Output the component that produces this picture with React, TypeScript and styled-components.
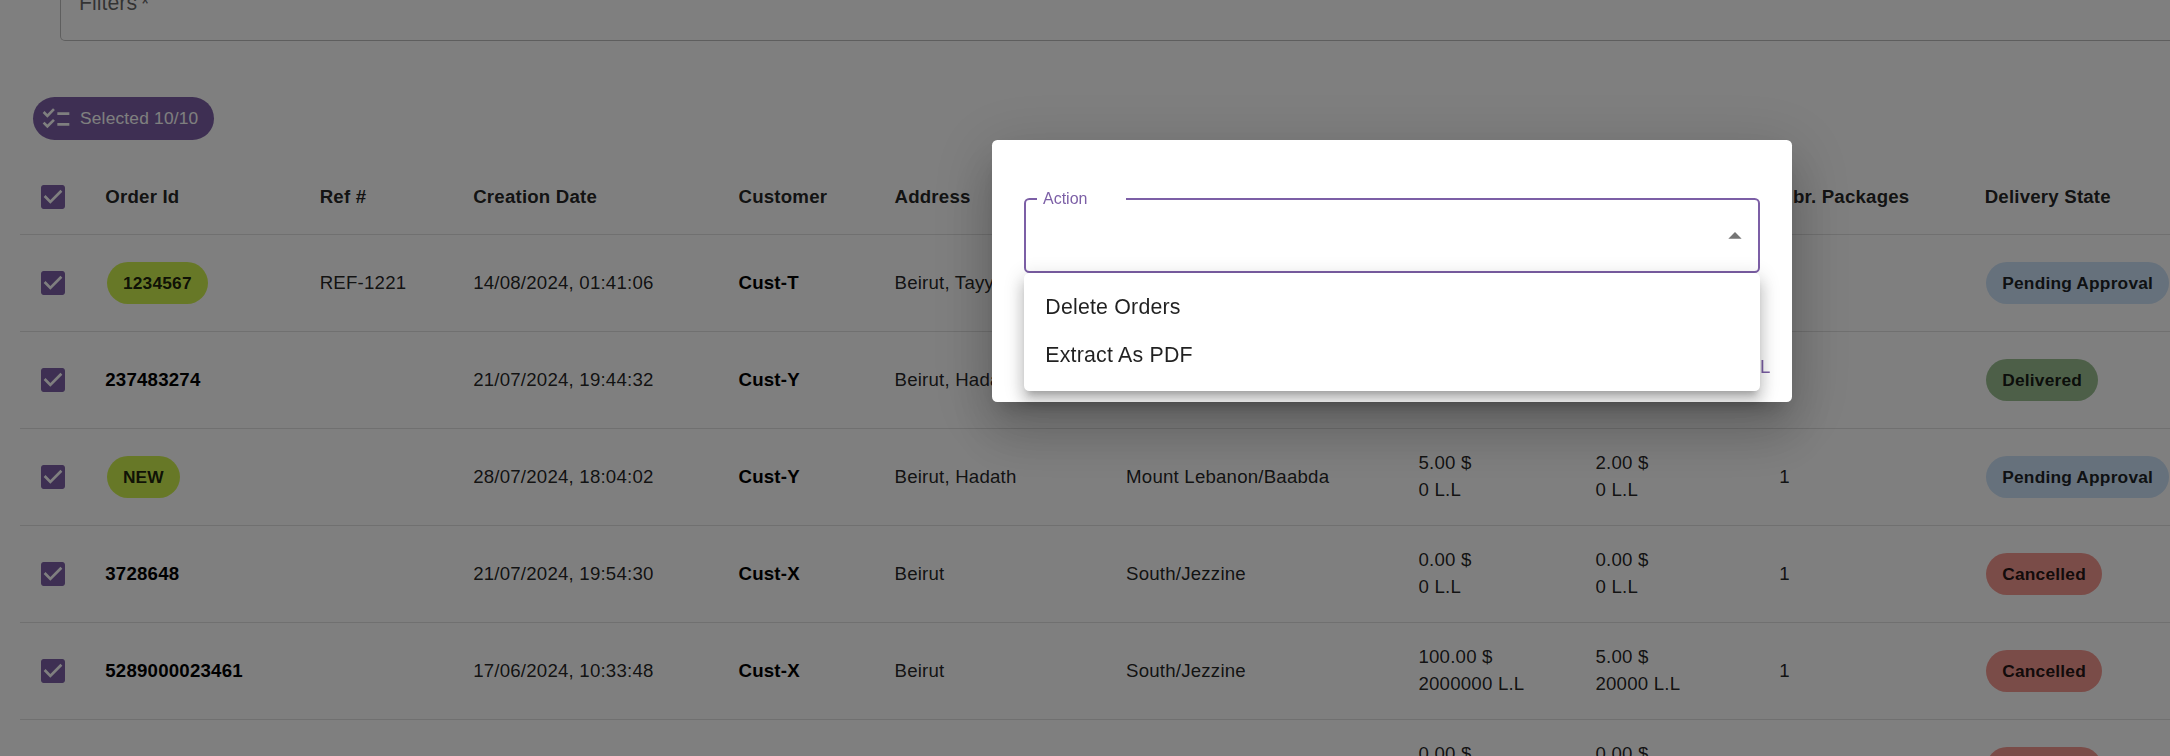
import React from "react";
import styled, { createGlobalStyle } from "styled-components";

const GlobalStyle = createGlobalStyle`
  * { box-sizing: border-box; }
  html, body { margin: 0; height: 756px; overflow: hidden; background: #fff; }
  body { font-family: "Liberation Sans", Helvetica, Arial, sans-serif; color: rgba(0, 0, 0, 0.87); }
`;

const PURPLE = "#7c5fa6";

const Page = styled.main`
  height: 756px;
  overflow: hidden;
  display: flex;
  flex-direction: column;
  align-items: flex-start;
`;

const FilterBox = styled.section`
  flex: none;
  width: 2200px;
  height: 41px;
  margin-left: 60px;
  padding-left: 18px;
  border: 1px solid rgba(0, 0, 0, 0.26);
  border-top: 0;
  border-radius: 0 0 5px 5px;
  color: rgba(0, 0, 0, 0.6);
  font-size: 21.33px;
  line-height: 30px;
`;

const FilterLabel = styled.span`
  display: block;
  margin-top: -12px;
`;

const Asterisk = styled.span`
  margin-left: 4px;
  vertical-align: -1px;
  line-height: 0;
`;

const SelectedChip = styled.button`
  flex: none;
  display: flex;
  align-items: center;
  width: 181px;
  height: 43px;
  margin: 56px 0 0 33px;
  padding: 0 0 0 7px;
  gap: 8px;
  border: 0;
  border-radius: 21.5px;
  background: ${PURPLE};
  color: #fff;
  font: 17.33px "Liberation Sans", Helvetica, Arial, sans-serif;
  letter-spacing: 0.2px;
  white-space: nowrap;
`;

const Table = styled.div`
  flex: none;
  width: 2240px;
  margin: 20px 0 0 20px;
  font-size: 18.67px;
  letter-spacing: 0.2px;
  line-height: 26.67px;
`;

const Row = styled.div<{ $head?: boolean }>`
  display: grid;
  grid-template-columns: 85.3px 214.4px 153.5px 265.3px 156px 231.6px 292.4px 177px 183.8px 205.4px 1fr;
  align-items: center;
  height: ${(p) => (p.$head ? 75 : 97)}px;
  border-bottom: 1px solid rgba(224, 224, 224, 1);
  font-weight: ${(p) => (p.$head ? 700 : 400)};
  white-space: nowrap;
`;

const CheckCell = styled.div`
  display: flex;
  padding-left: 17px;
`;

const StrongText = styled.strong`
  color: #000;
  font-weight: 700;
`;

const Chip = styled.span<{ $color: string }>`
  display: inline-flex;
  align-items: center;
  height: 42px;
  margin-left: 1.6px;
  padding: 0 16px;
  border-radius: 21px;
  background: ${(p) => p.$color};
  font-size: 17.33px;
  font-weight: 700;
  letter-spacing: 0.2px;
`;

const Backdrop = styled.div`
  position: fixed;
  inset: 0;
  display: flex;
  justify-content: center;
  align-items: flex-start;
  padding: 140px 0 0 614px;
  background: rgba(0, 0, 0, 0.5);
`;

const Dialog = styled.div`
  position: relative;
  width: 800px;
  height: 262px;
  padding: 50px 32px 0;
  border-radius: 5.33px;
  background: #fff;
  box-shadow:
    0 14.7px 20px -9.3px rgba(0, 0, 0, 0.2),
    0 32px 50.7px 4px rgba(0, 0, 0, 0.14),
    0 12px 61.3px 10.7px rgba(0, 0, 0, 0.12);
`;

const SelectField = styled.fieldset`
  display: flex;
  justify-content: flex-end;
  align-items: center;
  width: 736px;
  height: 83px;
  margin: 0;
  padding: 0 7px 7px 11px;
  border: 2px solid ${PURPLE};
  border-radius: 5.33px;
`;

const SelectLabel = styled.legend`
  width: 89px;
  height: 18px;
  padding: 0 0 0 6px;
  color: ${PURPLE};
  font-size: 16px;
  line-height: 18px;
`;

const Menu = styled.ul`
  position: absolute;
  top: 133px;
  left: 32px;
  width: 736px;
  height: 118px;
  margin: 0;
  padding: 10.67px 0;
  border-radius: 5.33px;
  background: #fff;
  list-style: none;
  box-shadow:
    0 6.7px 6.7px -4px rgba(0, 0, 0, 0.2),
    0 10.7px 13.3px 1.3px rgba(0, 0, 0, 0.14),
    0 4px 18.7px 2.7px rgba(0, 0, 0, 0.12);
`;

const MenuItem = styled.li`
  display: flex;
  align-items: center;
  height: 48px;
  padding: 0 21.33px;
  font-size: 21.33px;
  letter-spacing: 0.2px;
`;

const Actions = styled.footer`
  display: flex;
  justify-content: flex-end;
  padding-top: 80px;
  margin-right: -11px;
`;

const CancelButton = styled.button`
  border: 0;
  padding: 0;
  background: none;
  color: ${PURPLE};
  font: 18.67px/28px "Liberation Sans", Helvetica, Arial, sans-serif;
  letter-spacing: 0.53px;
`;

const Check = () => (
  <svg width="32" height="32" viewBox="0 0 24 24" aria-hidden="true">
    <path
      fill={PURPLE}
      d="M19 3H5c-1.11 0-2 .9-2 2v14c0 1.1.89 2 2 2h14c1.11 0 2-.9 2-2V5c0-1.1-.89-2-2-2zm-9 14l-5-5 1.41-1.41L10 14.17l7.59-7.59L19 8l-9 9z"
    />
  </svg>
);

const ChecklistIcon = () => (
  <svg width="32" height="32" viewBox="0 0 24 24" aria-hidden="true">
    <path
      fill="currentColor"
      d="M22 7h-9v2h9V7zm0 8h-9v2h9v-2zM5.54 11L2 7.46l1.41-1.41 2.12 2.12 4.24-4.24 1.41 1.41L5.54 11zm0 8L2 15.46l1.41-1.41 2.12 2.12 4.24-4.24 1.41 1.41L5.54 19z"
    />
  </svg>
);

const ArrowUp = () => (
  <svg width="32" height="32" viewBox="0 0 24 24" aria-hidden="true">
    <path fill="rgba(0,0,0,0.54)" d="M7 14l5-5 5 5z" />
  </svg>
);

type State = "Pending Approval" | "Delivered" | "Cancelled";

const STATE_COLORS: Record<State, string> = {
  "Pending Approval": "#cce2f8",
  Delivered: "#9abf91",
  Cancelled: "#f59890",
};

interface Order {
  id: string;
  isNew?: boolean;
  reference?: string;
  created: string;
  customer: string;
  address: string;
  region: string;
  price: [string, string];
  fees: [string, string];
  packages: number;
  state: State;
}

const ORDERS: Order[] = [
  { id: "1234567", isNew: true, reference: "REF-1221", created: "14/08/2024, 01:41:06", customer: "Cust-T", address: "Beirut, Tayyouneh", region: "Beirut", price: ["0.00 $", "0 L.L"], fees: ["0.00 $", "0 L.L"], packages: 1, state: "Pending Approval" },
  { id: "237483274", created: "21/07/2024, 19:44:32", customer: "Cust-Y", address: "Beirut, Hadath", region: "Mount Lebanon/Baabda", price: ["0.00 $", "0 L.L"], fees: ["0.00 $", "0 L.L"], packages: 1, state: "Delivered" },
  { id: "NEW", isNew: true, created: "28/07/2024, 18:04:02", customer: "Cust-Y", address: "Beirut, Hadath", region: "Mount Lebanon/Baabda", price: ["5.00 $", "0 L.L"], fees: ["2.00 $", "0 L.L"], packages: 1, state: "Pending Approval" },
  { id: "3728648", created: "21/07/2024, 19:54:30", customer: "Cust-X", address: "Beirut", region: "South/Jezzine", price: ["0.00 $", "0 L.L"], fees: ["0.00 $", "0 L.L"], packages: 1, state: "Cancelled" },
  { id: "5289000023461", created: "17/06/2024, 10:33:48", customer: "Cust-X", address: "Beirut", region: "South/Jezzine", price: ["100.00 $", "2000000 L.L"], fees: ["5.00 $", "20000 L.L"], packages: 1, state: "Cancelled" },
  { id: "", created: "", customer: "", address: "", region: "", price: ["0.00 $", "0 L.L"], fees: ["0.00 $", "0 L.L"], packages: 1, state: "Cancelled" },
];

const HEADINGS = ["Order Id", "Ref #", "Creation Date", "Customer", "Address", "Region", "Price", "Fees", "Nbr. Packages", "Delivery State"];

const Amount = ({ lines }: { lines: [string, string] }) => (
  <div>
    {lines[0]}
    <br />
    {lines[1]}
  </div>
);

const OrderRow = ({ order }: { order: Order }) => (
  <Row>
    <CheckCell><Check /></CheckCell>
    <div>{order.isNew ? <Chip $color="#cff14e">{order.id}</Chip> : <StrongText>{order.id}</StrongText>}</div>
    <div>{order.reference}</div>
    <div>{order.created}</div>
    <StrongText>{order.customer}</StrongText>
    <div>{order.address}</div>
    <div>{order.region}</div>
    <Amount lines={order.price} />
    <Amount lines={order.fees} />
    <div>{order.packages}</div>
    <div><Chip $color={STATE_COLORS[order.state]}>{order.state}</Chip></div>
  </Row>
);

export default function App() {
  return (
    <>
      <GlobalStyle />
      <Page>
        <FilterBox><FilterLabel>Filters<Asterisk>*</Asterisk></FilterLabel></FilterBox>
        <SelectedChip><ChecklistIcon />Selected 10/10</SelectedChip>
        <Table>
          <Row $head>
            <CheckCell><Check /></CheckCell>
            {HEADINGS.map((h) => <div key={h}>{h}</div>)}
          </Row>
          {ORDERS.map((o, i) => <OrderRow key={i} order={o} />)}
        </Table>
      </Page>
      <Backdrop>
        <Dialog>
          <SelectField>
            <SelectLabel>Action</SelectLabel>
            <ArrowUp />
          </SelectField>
          <Actions><CancelButton>CANCEL</CancelButton></Actions>
          <Menu>
            <MenuItem>Delete Orders</MenuItem>
            <MenuItem>Extract As PDF</MenuItem>
          </Menu>
        </Dialog>
      </Backdrop>
    </>
  );
}
